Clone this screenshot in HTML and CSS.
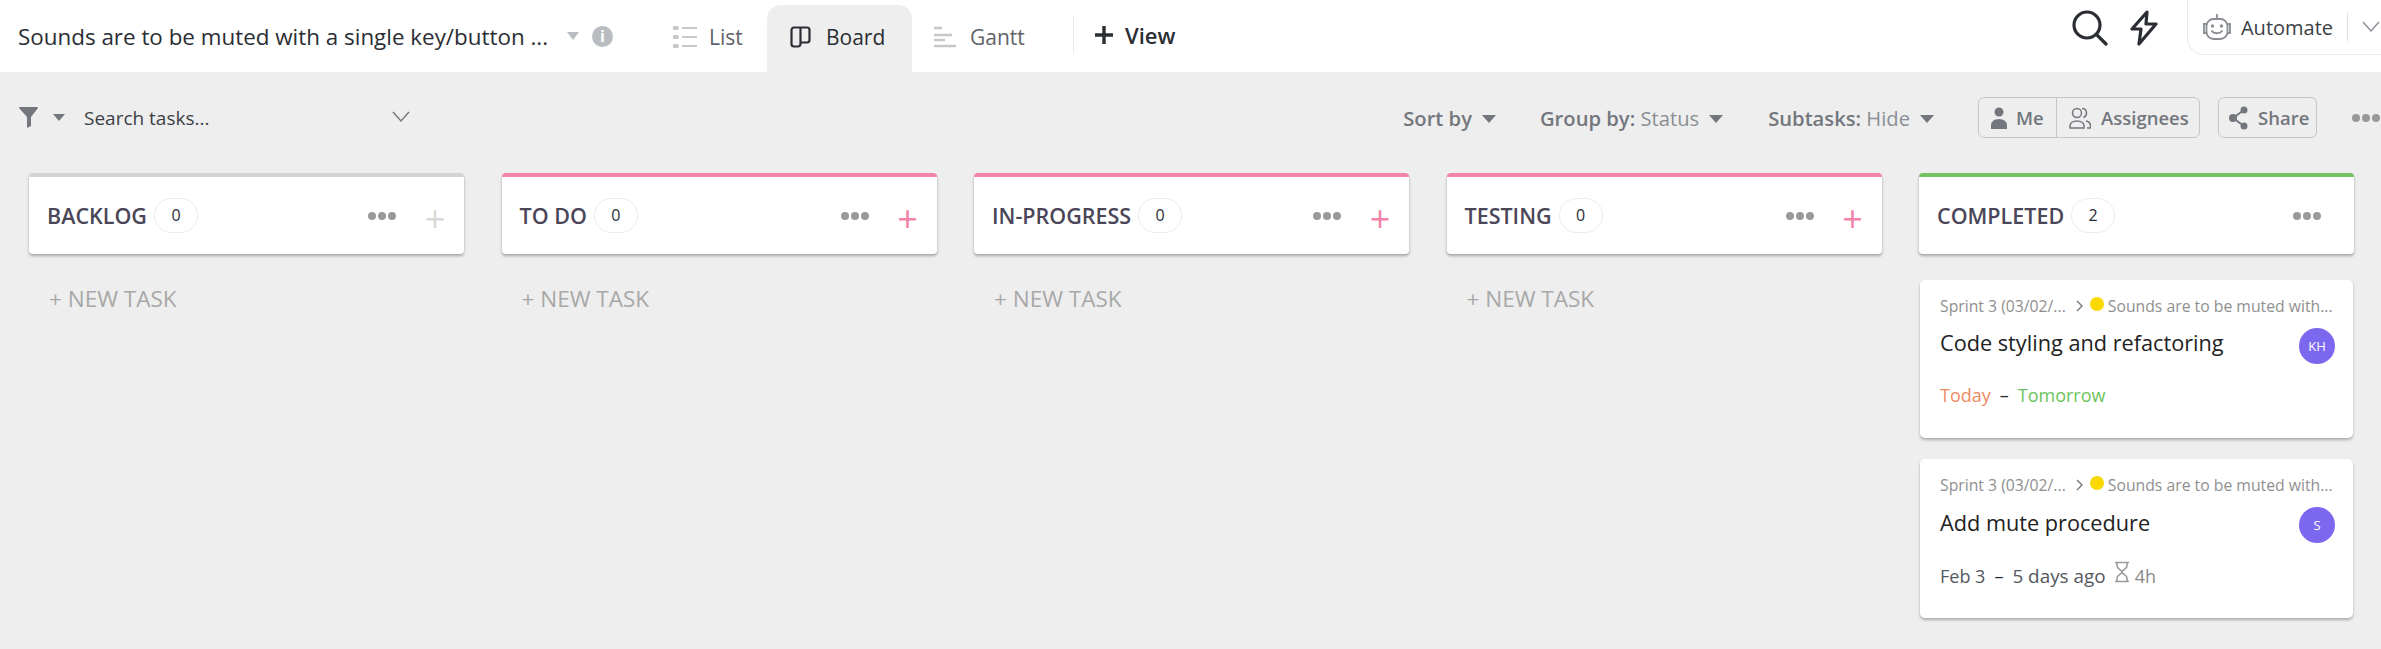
FILE: index.html
```html
<!DOCTYPE html>
<html lang="en">

<head>
    <meta charset="UTF-8">
    <title>Board</title>
    <link rel="stylesheet" href="styles.css">
</head>

<body>
    <header class="topbar">
        <div class="title">Sounds are to be muted with a single key/button ...</div>
        <span class="caret caret-light title-caret"></span>
        <span class="info">i</span>
        <nav class="tabs">
            <a class="tab tab-list">
                <svg width="25" height="22" viewBox="0 0 25 22" fill="none" stroke="#c8c8c8" stroke-width="2"><path d="M9 2h15M9 11h15M9 20h15"/><path d="M1 2h3M1 11h3M1 20h3" stroke-width="4" stroke-linecap="round"/></svg>
                List
            </a>
            <a class="tab tab-board">
                <svg width="21" height="22" viewBox="0 0 21 22" fill="none" stroke="#2a2e34" stroke-width="2.2"><path d="M10.500 1.500H4A2.500 2.500 0 0 0 1.500 4v14A2.500 2.500 0 0 0 4 20.500h4A2.500 2.500 0 0 0 10.500 18zM10.500 1.500H17A2.500 2.500 0 0 1 19.500 4v10a2.500 2.500 0 0 1-2.500 2.500h-6.500"/></svg>
                Board
            </a>
            <a class="tab tab-gantt">
                <svg width="24" height="22" viewBox="0 0 24 22" fill="none" stroke="#c8c8c8" stroke-width="2.400"><path d="M1 2h8M1 9h18M1 14h11M1 20h22"/></svg>
                Gantt
            </a>
        </nav>
        <div class="add-view">
            <svg width="18" height="18" viewBox="0 0 18 18" fill="none" stroke="#2a2e34" stroke-width="3.4"><path d="M9 0v18M0 9h18"/></svg>
            View
        </div>
        <div class="top-right">
            <svg class="icon-search" width="36" height="36" viewBox="0 0 36 36" fill="none" stroke="#2a2e34" stroke-width="3.2" stroke-linecap="round"><circle cx="15" cy="15" r="13"/><path d="M24.500 24.500L34 34"/></svg>
            <svg class="icon-bolt" width="28" height="36" viewBox="0 0 28 36" fill="none" stroke="#2a2e34" stroke-width="3.2" stroke-linejoin="round"><path d="M17 2L2 19h9l-2 15 17-20h-10z"/></svg>
            <div class="automate">
                <svg width="30" height="30" viewBox="0 0 30 30" fill="none" stroke="#8a8e94" stroke-width="1.800"><path d="M15 2v5"/><rect x="4.500" y="7" width="21" height="20" rx="7"/><path d="M4 12H2v9h2M26 12h2v9h-2"/><path d="M10 19c2 3 8 3 10 0" stroke-linecap="round"/><circle cx="10.500" cy="14" r=".8"/><circle cx="19.500" cy="14" r=".8"/></svg>
                <span class="automate-label">Automate</span>
                <span class="automate-sep"></span>
                <svg width="20" height="12" viewBox="0 0 20 12" fill="none" stroke="#8a8e94" stroke-width="1.400"><path d="M2 1l8 9 8-9"/></svg>
            </div>
        </div>
    </header>

    <section class="toolbar">
        <svg class="icon-filter" width="20" height="21" viewBox="0 0 20 21" fill="#73777d"><path d="M0 1a1 1 0 0 1 1-1h17a1 1 0 0 1 1 1l-7 9v9l-4 2V10z"/></svg>
        <span class="caret filter-caret"></span>
        <span class="search">Search tasks...</span>
        <svg class="search-chevron" width="20" height="12" viewBox="0 0 20 12" fill="none" stroke="#73777d" stroke-width="1.400"><path d="M2 1l8 9 8-9"/></svg>
        <div class="toolbar-right">
            <span class="opt opt-sort"><b>Sort by</b><span class="caret"></span></span>
            <span class="opt opt-group"><b>Group by:</b> Status<span class="caret"></span></span>
            <span class="opt opt-sub"><b>Subtasks:</b> Hide<span class="caret"></span></span>
            <div class="btn-group">
                <span class="btn btn-me">
                    <svg width="16" height="22" viewBox="0 0 16 22" fill="#73777d"><circle cx="8" cy="5" r="4.500"/><path d="M0 22v-4c0-3 3-6 8-6s8 3 8 6v4z"/></svg>
                    Me
                </span>
                <span class="btn btn-assign">
                    <svg width="22" height="22" viewBox="0 0 22 22" fill="none" stroke="#73777d" stroke-width="1.500"><circle cx="8" cy="6" r="4.500"/><path d="M1 21v-2c0-3 3-5 7-5s7 2 7 5v2z"/><path d="M13 1.500c3 0 4.500 2 4.500 4.500s-1.500 4-3 4.500M17 14c3 .5 4.500 2.500 4.500 5v2H18"/></svg>
                    Assignees
                </span>
            </div>
            <span class="btn btn-share">
                <svg width="20" height="24" viewBox="0 0 20 24" fill="#73777d" stroke="#73777d" stroke-width="2"><circle cx="15" cy="4" r="3.500" stroke="none"/><circle cx="4" cy="12" r="4" stroke="none"/><circle cx="15" cy="20" r="3.500" stroke="none"/><path d="M15 4L4 12l11 8" fill="none"/></svg>
                Share
            </span>
            <span class="dots toolbar-dots"><i></i><i></i><i></i></span>
        </div>
    </section>

    <main class="board">
        <div class="col">
            <div class="col-head head-grey">
                <span class="col-name">BACKLOG</span>
                <span class="count">0</span>
                <span class="dots"><i></i><i></i><i></i></span>
                <span class="plus plus-grey">+</span>
            </div>
            <div class="new-task">+ NEW TASK</div>
        </div>
        <div class="col">
            <div class="col-head head-pink">
                <span class="col-name">TO DO</span>
                <span class="count">0</span>
                <span class="dots"><i></i><i></i><i></i></span>
                <span class="plus">+</span>
            </div>
            <div class="new-task">+ NEW TASK</div>
        </div>
        <div class="col">
            <div class="col-head head-pink">
                <span class="col-name">IN-PROGRESS</span>
                <span class="count">0</span>
                <span class="dots"><i></i><i></i><i></i></span>
                <span class="plus">+</span>
            </div>
            <div class="new-task">+ NEW TASK</div>
        </div>
        <div class="col">
            <div class="col-head head-pink">
                <span class="col-name">TESTING</span>
                <span class="count">0</span>
                <span class="dots"><i></i><i></i><i></i></span>
                <span class="plus">+</span>
            </div>
            <div class="new-task">+ NEW TASK</div>
        </div>
        <div class="col">
            <div class="col-head head-green">
                <span class="col-name">COMPLETED</span>
                <span class="count">2</span>
                <span class="dots dots-last"><i></i><i></i><i></i></span>
            </div>
            <div class="card">
                <div class="crumb">
                    <span>Sprint 3 (03/02/...</span>
                    <svg class="crumb-arrow" width="8" height="12" viewBox="0 0 8 12" fill="none" stroke="#73777d" stroke-width="1.400"><path d="M1 1l5 5-5 5"/></svg>
                    <span class="dot-yellow"></span>
                    <span>Sounds are to be muted with...</span>
                </div>
                <div class="card-main">
                    <span class="card-title">Code styling and refactoring</span>
                    <span class="avatar">KH</span>
                </div>
                <div class="card-dates">
                    <span class="date-today">Today</span>
                    <span class="date-dash">–</span>
                    <span class="date-tomorrow">Tomorrow</span>
                </div>
            </div>
            <div class="card">
                <div class="crumb">
                    <span>Sprint 3 (03/02/...</span>
                    <svg class="crumb-arrow" width="8" height="12" viewBox="0 0 8 12" fill="none" stroke="#73777d" stroke-width="1.400"><path d="M1 1l5 5-5 5"/></svg>
                    <span class="dot-yellow"></span>
                    <span>Sounds are to be muted with...</span>
                </div>
                <div class="card-main">
                    <span class="card-title">Add mute procedure</span>
                    <span class="avatar">S</span>
                </div>
                <div class="card-dates">
                    <span>Feb 3</span>
                    <span class="date-dash">–</span>
                    <span class="date-ago">5 days ago</span>
                    <svg class="hourglass" width="16" height="22" viewBox="0 0 16 22" fill="none" stroke="#9a9a9a" stroke-width="1.600"><path d="M1 1.500h14M1 20.500h14"/><path d="M3 2v3c0 3 5 4 5 6s-5 3-5 6v3M13 2v3c0 3-5 4-5 6s5 3 5 6v3"/></svg>
                    <span class="est">4h</span>
                </div>
            </div>
        </div>
    </main>
</body>

</html>
```

FILE: styles.css
```css
* {
    padding: 0;
    margin: 0;
    box-sizing: border-box;
}

html,
body {
    height: 100%;
    overflow: hidden;
}

body {
    background-color: #eeeeee;
    font-family: "Open Sans", "Noto Sans", sans-serif;
    color: #2a2e34;
}

.caret {
    display: inline-block;
    width: 0;
    height: 0;
    border-left: 7px solid transparent;
    border-right: 7px solid transparent;
    border-top: 8px solid #73777d;
}

.caret-light {
    border-top-color: #b9bcc0;
}

/* top bar */
.topbar {
    height: 72px;
    background: #fff;
    display: flex;
    align-items: center;
    padding-left: 18px;
}

.title {
    width: 540px;
    font-size: 22.400px;
    font-weight: 500;
    white-space: nowrap;
    color: #2a2e34;
}

.title-caret {
    margin-left: 9px;
    border-left-width: 6px;
    border-right-width: 6px;
}

.info {
    margin-left: 13px;
    width: 21px;
    height: 21px;
    border-radius: 50%;
    background: #b9bcc0;
    color: #fff;
    font-size: 16px;
    font-weight: 700;
    text-align: center;
    line-height: 21px;
}

.tabs {
    display: flex;
    align-self: flex-end;
    height: 67px;
    margin-left: 60px;
}

.tab {
    display: flex;
    align-items: center;
    font-size: 21px;
    color: #5f6368;
    padding-bottom: 3px;
}

.tab-list {
    width: 94px;
    gap: 11px;
}

.tab-board {
    width: 145px;
    padding-left: 23px;
    gap: 15px;
    background: #eeeeee;
    border-radius: 14px 14px 0 0;
    color: #2a2e34;
    font-weight: 500;
}

.tab-gantt {
    width: 161px;
    padding-left: 21px;
    gap: 13px;
}

.add-view {
    display: flex;
    align-items: center;
    gap: 12px;
    height: 36px;
    margin-bottom: 2px;
    padding-left: 21px;
    border-left: 1px solid #e8e8e8;
    font-size: 22px;
    font-weight: 600;
}

.top-right {
    margin-left: auto;
    display: flex;
    align-items: center;
    height: 55px;
    align-self: flex-start;
}

.icon-search {
    margin-right: 22px;
}

.icon-bolt {
    margin-right: 29px;
}

.automate {
    width: 194px;
    height: 55px;
    border: 1px solid #ececec;
    border-top: 0;
    border-right: 0;
    border-radius: 0 0 0 16px;
    display: flex;
    align-items: center;
    padding-left: 14px;
}

.automate-label {
    margin-left: 9px;
    font-size: 20px;
    color: #3c4046;
}

.automate-sep {
    width: 1px;
    height: 28px;
    background: #e0e0e0;
    margin: 0 13px 0 14px;
}

/* toolbar */
.toolbar {
    height: 91px;
    display: flex;
    align-items: center;
    padding: 0 0 0 19px;
}

.filter-caret {
    margin-left: 14px;
    border-left-width: 6px;
    border-right-width: 6px;
    border-top-width: 7px;
}

.search {
    margin-left: 19px;
    width: 307px;
    font-size: 19px;
    color: #3c4046;
}

.search-chevron {
    margin-top: -1px;
}

.toolbar-right {
    margin-left: auto;
    display: flex;
    align-items: center;
    font-size: 20.200px;
    color: #8a8e94;
}

.opt b {
    font-weight: 600;
    color: #73777d;
}

.opt .caret {
    margin-left: 10px;
    vertical-align: 3px;
}

.opt-sort {
    margin-right: 44px;
}

.opt-group {
    margin-right: 45px;
}

.opt-sub {
    margin-right: 44px;
}

.btn-group {
    display: flex;
    height: 41px;
    border: 1px solid #c4c6c9;
    border-radius: 6px;
    margin-right: 18px;
}

.btn {
    display: flex;
    align-items: center;
    font-size: 18.500px;
    font-weight: 600;
    color: #73777d;
}

.btn-me {
    width: 78px;
    padding-left: 12px;
    gap: 9px;
    border-right: 1px solid #c4c6c9;
}

.btn-assign {
    width: 142px;
    padding-left: 12px;
    gap: 10px;
}

.btn-share {
    height: 41px;
    width: 99px;
    border: 1px solid #c4c6c9;
    border-radius: 6px;
    padding-left: 10px;
    gap: 9px;
    margin-right: 35px;
}

.dots {
    display: flex;
    gap: 2px;
}

.dots i {
    display: block;
    width: 8px;
    height: 8px;
    border-radius: 50%;
    background: #999999;
}

.toolbar-dots {
    margin-right: 1px;
}

/* board */
.board {
    display: flex;
    gap: 37.500px;
    padding: 10px 26px 0 29px;
}

.col {
    width: 435px;
    flex-shrink: 0;
}

.col-head {
    height: 81px;
    background: #fff;
    border-top: 4px solid #d4d4d4;
    border-radius: 4px;
    box-shadow: 0 2px 3px rgba(0, 0, 0, 0.3);
    display: flex;
    align-items: center;
    padding: 0 18px;
}

.head-pink {
    border-top-color: #f383a9;
}

.head-green {
    border-top-color: #75c35f;
}

.col-name {
    font-size: 21.500px;
    font-weight: 600;
    color: #4a4658;
}

.count {
    margin-left: 7px;
    width: 44px;
    height: 35px;
    border: 1px solid #ececec;
    border-radius: 18px;
    font-size: 16px;
    font-weight: 500;
    text-align: center;
    line-height: 33px;
    color: #2a2e34;
}

.col-head .dots {
    margin-left: auto;
}

.dots-last {
    margin-right: 15px;
}

.plus {
    margin-left: 28px;
    margin-top: 6px;
    width: 22px;
    font-size: 36px;
    line-height: 32px;
    font-weight: 400;
    text-align: center;
    color: #f383a9;
}

.plus-grey {
    color: #d9d9d9;
}

.new-task {
    margin-top: 29px;
    padding-left: 20px;
    font-size: 22.500px;
    color: #a8a8a8;
}

/* task cards */
.card {
    width: 433px;
    height: 158px;
    margin: 26px 1px 21px;
    padding: 15px 20px 0;
    background: #fff;
    border-radius: 5px;
    box-shadow: 0 2px 3px rgba(0, 0, 0, 0.28);
}

.card + .card {
    height: 159px;
    margin-top: 0;
}

.crumb {
    display: flex;
    align-items: center;
    font-size: 15.750px;
    white-space: nowrap;
    color: #8f8f8f;
}

.crumb-arrow {
    margin-left: 10px;
    margin-right: 4px;
}

.dot-yellow {
    width: 14px;
    height: 14px;
    border-radius: 50%;
    background: #f9d900;
    margin: 0 4px 4px 2px;
}

.card-main {
    display: flex;
    justify-content: space-between;
    margin-top: 2px;
}

.card-title {
    font-size: 21.700px;
    color: #222222;
    margin-top: 9px;
}

.card + .card .card-title {
    margin-top: 10px;
}

.avatar {
    width: 36px;
    height: 36px;
    margin-top: 9px;
    margin-right: -2px;
    border-radius: 50%;
    background: #7b68ee;
    color: #fff;
    font-size: 13px;
    text-align: center;
    line-height: 36px;
}

.card-dates {
    display: flex;
    align-items: center;
    gap: 9px;
    margin-top: 19px;
    font-size: 18px;
    color: #54585e;
}

.card + .card .card-dates {
    margin-top: 20px;
}

.date-today {
    color: #f08a62;
}

.date-tomorrow {
    color: #6cc35c;
}

.date-dash {
    color: #2a2e34;
}

.date-ago {
    font-size: 18.900px;
}

.hourglass {
    margin-top: -8px;
    margin-left: -1px;
}

.est {
    margin-left: -4px;
    color: #8a8a8a;
}
```
